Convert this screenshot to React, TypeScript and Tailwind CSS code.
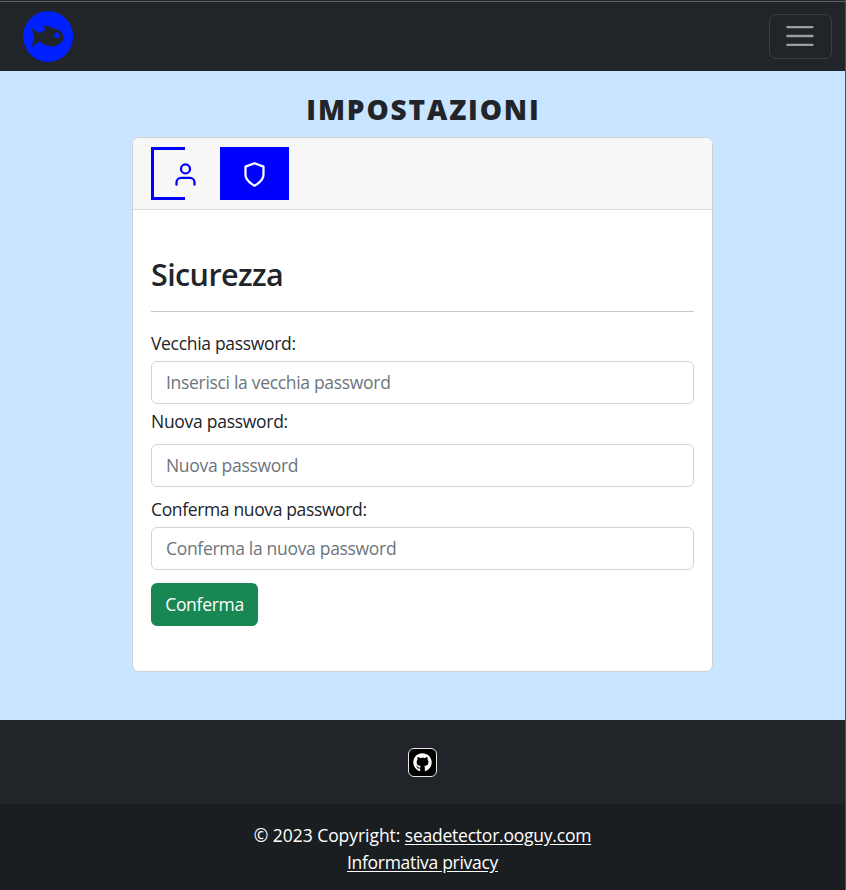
import { FaGithub } from "react-icons/fa";

function FishLogo() {
  return (
    <svg width="51" height="52" viewBox="0 0 51 52" className="mt-[2px] ml-[23px]">
      <ellipse cx="25.1" cy="25.5" rx="25" ry="25.5" fill="#0020ff" />
      <path
        d="M9 17.2 Q12.5 20.6 16.8 22 Q19 21 21.8 19.4 Q21.9 17.4 20.8 15.3 Q26 14.4 30 17.1 Q38.5 18 41 26 Q41.2 27.5 40.6 28.6 Q37 35 29 35.4 Q22 35 16.8 30.6 Q13 32.5 8.9 36.2 Q9.4 30.5 11.4 27 Q9.4 22.5 9 17.2Z"
        fill="#212529"
      />
      <circle cx="33.8" cy="24.2" r="2.7" fill="#0020ff" />
    </svg>
  );
}

function MenuIcon() {
  return (
    <svg width="28" height="28" viewBox="0 0 28 28" stroke="#9b9d9f" strokeWidth="2.3" strokeLinecap="round">
      <path d="M1.3 5.1h25.2M1.3 14h25.2M1.3 22.9h25.2" />
    </svg>
  );
}

function UserIcon() {
  return (
    <svg width="27" height="27" viewBox="0 0 24 24" fill="none" stroke="currentColor" strokeWidth="2" strokeLinecap="round" strokeLinejoin="round">
      <path d="M20 21v-2a4 4 0 0 0-4-4H8a4 4 0 0 0-4 4v2" />
      <circle cx="12" cy="7" r="4" />
    </svg>
  );
}

function ShieldIcon() {
  return (
    <svg width="27" height="27" viewBox="0 0 24 24" fill="none" stroke="currentColor" strokeWidth="2" strokeLinecap="round" strokeLinejoin="round">
      <path d="M12 22s8-4 8-10V5l-8-3-8 3v7c0 6 8 10 8 10z" />
    </svg>
  );
}

const inputClass =
  "block h-[43px] w-full rounded-[6px] border border-[#ced4da] bg-white px-[14px] pb-px text-[17.5px] tracking-[-0.31px] text-[#212529] outline-none placeholder:text-[#6c757d]";

export default function App() {
  return (
    <div className="flex h-[890px] w-[846px] flex-col overflow-hidden border-r border-[#4b5054] bg-[#c9e5ff] font-['Open_Sans',sans-serif] text-[17.5px] leading-[27px] text-[#212529]">
      <header className="flex h-[71px] shrink-0 items-center justify-between border-t border-[#25262a] bg-[#212529] shadow-[inset_0_1px_0_#606266]">
        <FishLogo />
        <button aria-label="Menu" className="mr-[13px] flex h-[45px] w-[63px] items-center justify-center rounded-[7px] border border-[#3b3f43] pr-px">
          <MenuIcon />
        </button>
      </header>

      <main className="flex h-[649px] shrink-0 flex-col items-center">
        <h1 className="mt-[20px] h-[46px] pl-[2px] text-[28px] leading-[36px] font-extrabold tracking-[1.85px]">IMPOSTAZIONI</h1>
        <section className="flex h-[535px] w-[581px] flex-col overflow-hidden rounded-[7px] border border-[#d0d3d6] bg-white">
          <div className="flex h-[72px] shrink-0 border-b border-[#dcdcdd] bg-[#f7f7f7] pt-[9px] pl-[18px]">
            <button aria-label="Profilo" className="relative flex h-[53px] w-[69px] items-center justify-center pt-[2px] text-[#0000ff]">
              <span className="absolute inset-y-0 left-0 w-[34px] border-y-[3px] border-l-[3px] border-[#0000ff]" />
              <UserIcon />
            </button>
            <button aria-label="Sicurezza" className="flex h-[53px] w-[69px] items-center justify-center bg-[#0000ff] pt-[2px] text-white">
              <ShieldIcon />
            </button>
          </div>
          <form className="flex flex-col px-[18px]">
            <h2 className="mt-[45px] text-[30.5px] leading-[38px] font-semibold tracking-[-0.6px]">Sicurezza</h2>
            <hr className="mt-[18px] mb-[18px] border-[#c8c9ca]" />
            <label htmlFor="old" className="mb-[4px] tracking-[-0.32px]">Vecchia password:</label>
            <input id="old" type="password" placeholder="Inserisci la vecchia password" className={inputClass} />
            <label htmlFor="new" className="mt-[4px] mb-[9px] tracking-[-0.28px]">Nuova password:</label>
            <input id="new" type="password" placeholder="Nuova password" className={inputClass} />
            <label htmlFor="confirm" className="mt-[9px] mb-[4px] tracking-[-0.36px]">Conferma nuova password:</label>
            <input id="confirm" type="password" placeholder="Conferma la nuova password" className={inputClass} />
            <button type="button" className="mt-[13px] h-[43px] w-[107px] rounded-[6px] bg-[#198754] tracking-[-0.3px] text-white">Conferma</button>
          </form>
        </section>
      </main>

      <footer className="flex flex-1 flex-col bg-[#212529] text-white">
        <div className="flex h-[84px] shrink-0 items-center justify-center">
          <a href="#" aria-label="GitHub" className="flex h-[29px] w-[29px] items-center justify-center rounded-[6px] border border-[#e8e8e8] bg-black">
            <FaGithub size={19} />
          </a>
        </div>
        <div className="flex-1 bg-[#1b1e21] pt-[18px] text-center">
          <p className="tracking-[-0.05px]">© 2023 Copyright: <a href="#" className="tracking-[-0.23px] underline underline-offset-2">seadetector.ooguy.com</a></p>
          <p><a href="#" className="tracking-[-0.3px] underline underline-offset-2">Informativa privacy</a></p>
        </div>
      </footer>
    </div>
  );
}
